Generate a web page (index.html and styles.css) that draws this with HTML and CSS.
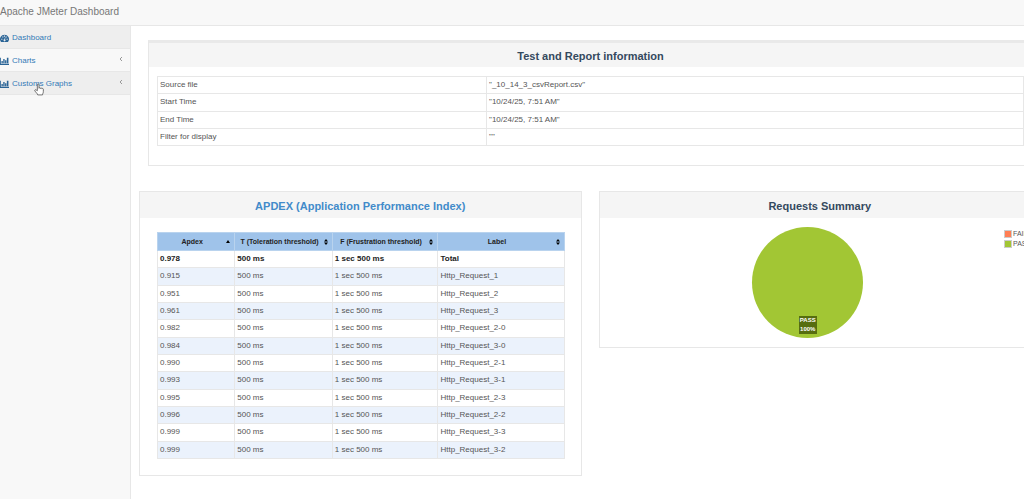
FILE: index.html
```
<!DOCTYPE html>
<html lang="en">
<head>
    <meta charset="UTF-8">
    <meta name="viewport" content="width=device-width, initial-scale=1.0">
    <title>Apache JMeter Dashboard</title>

    <link rel="stylesheet" href="styles.css">
</head>
<body>
    <header class="navbar">
        <a class="brand" href="#">Apache JMeter Dashboard</a>
    </header>

    <div class="wrapper">
        <nav class="sidebar">
            <a class="active" href="#">
                <svg class="icon" viewBox="0 0 16 14"><path fill="currentColor" fill-rule="evenodd" d="M8 1a8 8 0 0 0-6.700 12.300L2 14h12l.7-.7A8 8 0 0 0 8 1zM2.300 8.200h2v2h-2zM4 4.200h2v2H4zM7 2.600h2v2H7zM10 4.200h2v2h-2zM11.700 8.200h2v2h-2zM8.700 6l1 .3-.8 3.300a1.700 1.700 0 1 1-1-.2z"/></svg>
                Dashboard
            </a>
            <a href="#">
                <svg class="icon" viewBox="0 0 16 14"><path fill="currentColor" d="M0 1h1.500v11H16v2H0zM2.600 7h2.400v4H2.600zM5.800 3.500h2.400V11H5.800zM9 5.500h2.400V11H9zM12.200 1h2.800v10h-2.800z"/></svg>
                Charts
                <svg class="arrow" viewBox="0 0 4 6"><path fill="none" stroke="currentColor" d="M3 1L1 3l2 2"/></svg>
            </a>
            <a class="active" href="#">
                <svg class="icon" viewBox="0 0 16 14"><path fill="currentColor" d="M0 1h1.500v11H16v2H0zM2.600 7h2.400v4H2.600zM5.800 3.500h2.400V11H5.800zM9 5.500h2.400V11H9zM12.200 1h2.800v10h-2.800z"/></svg>
                Customs Graphs
                <svg class="arrow" viewBox="0 0 4 6"><path fill="none" stroke="currentColor" d="M3 1L1 3l2 2"/></svg>
                <svg class="pointer" viewBox="0 0 12 15"><path fill="#fff" stroke="#555" stroke-linejoin="round" d="M4 9V2c0-1.500 2-1.500 2 0v4c0-1 1.700-1 1.800.2 .2-.8 1.600-.7 1.700.5 .3-.7 1.700-.5 1.700.6V10c0 2-1 2.500-1 4H4.500C4 12 2 11 1 9c-.5-1.200 1-1.700 1.800-.8z"/></svg>
            </a>
        </nav>

        <main class="page">
            <section class="panel info">
                <h2 class="heading">Test and Report information</h2>
                <div class="body">
                    <table class="info-table">
                        <tr><td>Source file</td><td>"_10_14_3_csvReport.csv"</td></tr>
                        <tr><td>Start Time</td><td>"10/24/25, 7:51 AM"</td></tr>
                        <tr><td>End Time</td><td>"10/24/25, 7:51 AM"</td></tr>
                        <tr><td>Filter for display</td><td>""</td></tr>
                    </table>
                </div>
            </section>

            <div class="row">
                <section class="panel apdex">
                    <h2 class="heading"><a href="#">APDEX (Application Performance Index)</a></h2>
                    <div class="body">
                        <table class="apdex-table">
                            <colgroup>
                                <col class="col-apdex">
                                <col class="col-tolerated">
                                <col class="col-frustrated">
                                <col>
                            </colgroup>
                            <thead>
                                <tr>
                                    <th><div>Apdex<svg class="sort" viewBox="0 0 4 6"><path d="M0 4l2-3 2 3z"/></svg></div></th>
                                    <th><div>T (Toleration threshold)<svg class="sort" viewBox="0 0 4 6"><path d="M0 2.500L2 0l2 2.500zM0 3.500h4L2 6z"/></svg></div></th>
                                    <th><div>F (Frustration threshold)<svg class="sort" viewBox="0 0 4 6"><path d="M0 2.500L2 0l2 2.500zM0 3.500h4L2 6z"/></svg></div></th>
                                    <th><div>Label<svg class="sort" viewBox="0 0 4 6"><path d="M0 2.500L2 0l2 2.500zM0 3.500h4L2 6z"/></svg></div></th>
                                </tr>
                            </thead>
                            <tbody>
                                <tr class="total"><td>0.978</td><td>500 ms</td><td>1 sec 500 ms</td><td>Total</td></tr>
                                <tr><td>0.915</td><td>500 ms</td><td>1 sec 500 ms</td><td>Http_Request_1</td></tr>
                                <tr><td>0.951</td><td>500 ms</td><td>1 sec 500 ms</td><td>Http_Request_2</td></tr>
                                <tr><td>0.961</td><td>500 ms</td><td>1 sec 500 ms</td><td>Http_Request_3</td></tr>
                                <tr><td>0.982</td><td>500 ms</td><td>1 sec 500 ms</td><td>Http_Request_2-0</td></tr>
                                <tr><td>0.984</td><td>500 ms</td><td>1 sec 500 ms</td><td>Http_Request_3-0</td></tr>
                                <tr><td>0.990</td><td>500 ms</td><td>1 sec 500 ms</td><td>Http_Request_2-1</td></tr>
                                <tr><td>0.993</td><td>500 ms</td><td>1 sec 500 ms</td><td>Http_Request_3-1</td></tr>
                                <tr><td>0.995</td><td>500 ms</td><td>1 sec 500 ms</td><td>Http_Request_2-3</td></tr>
                                <tr><td>0.996</td><td>500 ms</td><td>1 sec 500 ms</td><td>Http_Request_2-2</td></tr>
                                <tr><td>0.999</td><td>500 ms</td><td>1 sec 500 ms</td><td>Http_Request_3-3</td></tr>
                                <tr><td>0.999</td><td>500 ms</td><td>1 sec 500 ms</td><td>Http_Request_3-2</td></tr>
                            </tbody>
                        </table>
                    </div>
                </section>

                <section class="panel summary">
                    <h2 class="heading">Requests Summary</h2>
                    <div class="body">
                        <div class="plot">
                            <div class="pie">
                                <div class="pie-label">PASS<br>100%</div>
                            </div>
                        </div>
                        <ul class="legend">
                            <li><span class="swatch fail"></span>FAIL</li>
                            <li><span class="swatch pass"></span>PASS</li>
                        </ul>
                    </div>
                </section>
            </div>
        </main>
    </div>
</body>
</html>
```
FILE: styles.css
```
:root {
    --link: #428bca;
    --heading: #34495e;
    --gray: #f8f8f8;
    --line: #e7e7e7;
    --pass: #a2c634;
    --fail: #ff7e54;
}

* {
    box-sizing: border-box;
    margin: 0;
    padding: 0;
}

body {
    min-height: 100vh;
    display: flex;
    flex-direction: column;
    overflow: hidden;
    font-family: "Liberation Sans", Arial, sans-serif;
    font-size: 8px;
    line-height: 12px;
    color: #555;
    background-color: #fff;
}

a {
    color: var(--link);
    text-decoration: none;
}

.navbar {
    height: 26px;
    padding-top: 6px;
    background-color: var(--gray);
    border-bottom: 1px solid var(--line);
}

.navbar .brand {
    font-size: 10px;
    color: #777;
}

.wrapper {
    flex: 1;
    display: flex;
}

.sidebar {
    width: 131px;
    flex-shrink: 0;
    background-color: var(--gray);
    border-right: 1px solid var(--line);
}

.sidebar a {
    position: relative;
    display: flex;
    align-items: center;
    height: 23px;
    gap: 3px;
    padding-top: 1px;
    padding-right: 7px;
    color: #337ab7;
    border-bottom: 1px solid var(--line);
}

.sidebar a.active {
    background-color: #eee;
}

.icon {
    width: 9px;
    height: 8px;
    color: #2a6496;
}

.arrow {
    width: 4px;
    height: 6px;
    margin-left: auto;
    margin-bottom: 4px;
    color: #999;
}

.pointer {
    position: absolute;
    left: 34px;
    top: 11px;
    width: 10px;
    height: 13px;
    z-index: 1;
}

.page {
    flex: 1;
    min-width: 0;
    padding-top: 14px;
}

.panel {
    border: 1px solid var(--line);
}

.panel .heading {
    height: 26px;
    font-size: 11px;
    line-height: 28px;
    text-align: center;
    color: var(--heading);
    background-color: #f5f5f5;
}

/* the panels run past the right edge of the window */
.info {
    margin-left: 17px;
    margin-right: -9px;
    border-top: 3px solid #e9e9e9;
}

.info .heading {
    height: 24px;
    line-height: 26px;
}

.info .body {
    padding: 9px 8px 19px;
}

.row {
    display: grid;
    grid-template-columns: 1fr 1fr;
    gap: 17px;
    align-items: start;
    margin: 25px -17px 0 8px;
}

table {
    width: 100%;
    border-collapse: collapse;
    table-layout: fixed;
}

td {
    padding: 0 2px;
    border: 1px solid var(--line);
}

.info-table {
    height: 70px;
}

.info-table td:first-child {
    width: 38%;
}

.apdex .body {
    padding: 14px 16px 16px 17px;
}

.apdex-table {
    height: 227px;
}

.apdex-table .col-apdex {
    width: 19%;
}
.apdex-table .col-tolerated {
    width: 24%;
}
.apdex-table .col-frustrated {
    width: 26%;
}

.apdex-table th {
    height: 18px;
    padding: 0 4px;
    font-size: 7px;
    color: #222;
    background-color: #9fc3ea;
    border: 1px solid #b9d3ee;
}

.apdex-table th div {
    position: relative;
    padding-right: 8px;
    white-space: nowrap;
}

.sort {
    position: absolute;
    right: 0;
    top: 3px;
    width: 4px;
    height: 6px;
}

.apdex-table tbody tr:nth-child(even) {
    background-color: #ebf2fc;
}

.apdex-table .total {
    font-weight: bold;
    color: #222;
}

.summary .body {
    display: flex;
    padding: 9px 0 9px 12px;
}

.plot {
    flex: 1;
    display: flex;
    justify-content: center;
}

.pie {
    display: flex;
    justify-content: center;
    align-items: flex-end;
    width: 111px;
    height: 111px;
    padding-bottom: 4px;
    border-radius: 50%;
    background-color: var(--pass);
}

.pie-label {
    width: 18px;
    font-size: 6px;
    line-height: 9px;
    font-weight: bold;
    text-align: center;
    color: #fff;
    background-color: #566d10;
}

.legend {
    width: 36px;
    padding-top: 2px;
    list-style: none;
    font-size: 7px;
    line-height: 10px;
}

.legend li {
    display: flex;
    align-items: center;
    gap: 1px;
}

.swatch {
    width: 8px;
    height: 8px;
    border: 1px solid #ccc;
}
.swatch.fail {
    background-color: var(--fail);
}
.swatch.pass {
    background-color: var(--pass);
}
```
